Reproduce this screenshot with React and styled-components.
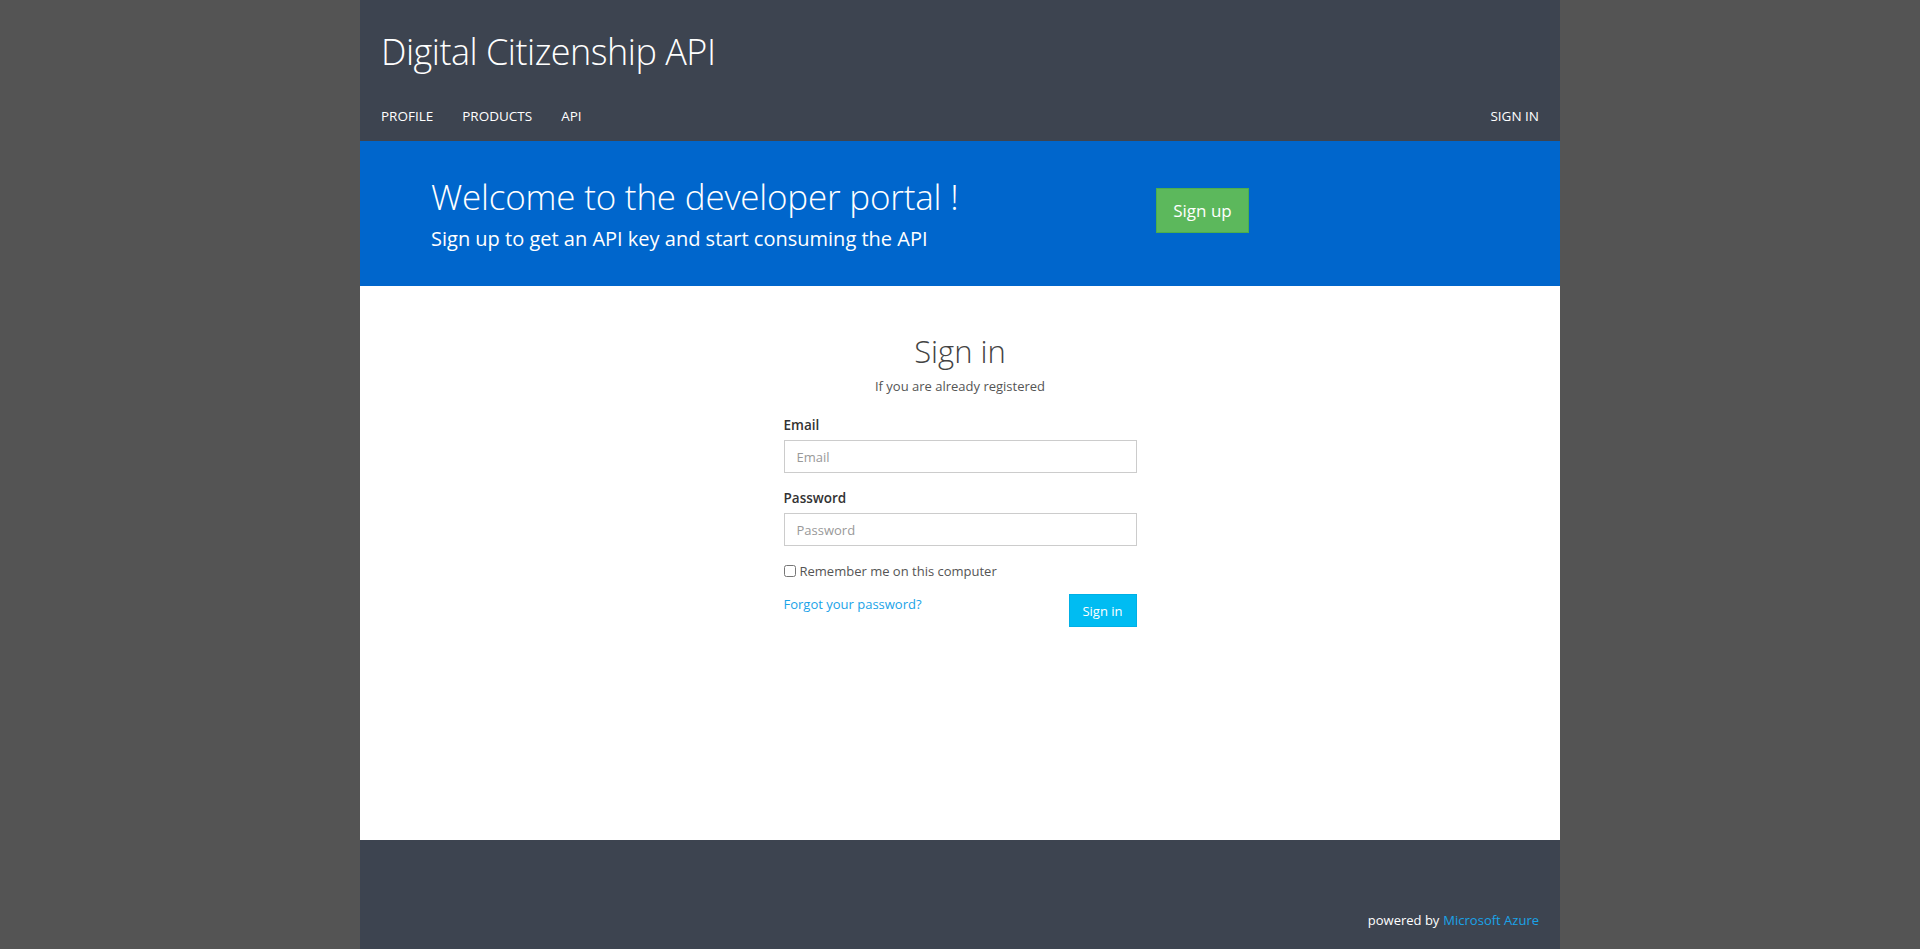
import React from "react";
import styled, { createGlobalStyle } from "styled-components";

const GlobalStyle = createGlobalStyle`
  html, body {
    margin: 0;
    padding: 0;
    background: #545454;
    font-family: "Open Sans", "Noto Sans", sans-serif;
  }
  * { box-sizing: border-box; }
`;

function App() {
  return (
    <>
      <GlobalStyle />
      <StPage>
        <StHeader>
          <StBrand>Digital Citizenship API</StBrand>
          <StNav>
            <StNavGroup>
              <StNavLink>PROFILE</StNavLink>
              <StNavLink>PRODUCTS</StNavLink>
              <StNavLink>API</StNavLink>
            </StNavGroup>
            <StNavLink>SIGN IN</StNavLink>
          </StNav>
        </StHeader>

        <StBanner>
          <div>
            <StWelcome>Welcome to the developer portal !</StWelcome>
            <StLead>Sign up to get an API key and start consuming the API</StLead>
          </div>
          <StSignUp>Sign up</StSignUp>
        </StBanner>

        <StMain>
          <StTitle>Sign in</StTitle>
          <StSubTitle>If you are already registered</StSubTitle>
          <StForm>
            <StField>
              <StLabel>Email</StLabel>
              <StInput type="text" placeholder="Email" />
            </StField>
            <StField>
              <StLabel>Password</StLabel>
              <StInput type="password" placeholder="Password" />
            </StField>
            <StCheckRow>
              <StCheck type="checkbox" />
              Remember me on this computer
            </StCheckRow>
            <StActions>
              <StLink>Forgot your password?</StLink>
              <StSignIn>Sign in</StSignIn>
            </StActions>
          </StForm>
        </StMain>

        <StFooter>
          powered by <StAzure>Microsoft Azure</StAzure>
        </StFooter>
      </StPage>
    </>
  );
}

export default App;

const StPage = styled.div`
  width: 1200px;
  min-height: 949px;
  margin: 0 auto;
  display: flex;
  flex-direction: column;
  background: #fff;
`;

const StHeader = styled.header`
  height: 141px;
  background: #3d4450;
  padding: 0 21px 0 21px;
  display: flex;
  flex-direction: column;
  justify-content: space-between;
  color: #fff;
`;

const StBrand = styled.h1`
  margin: 30px 0 0;
  font-size: 36px;
  font-weight: 300;
  line-height: 1.2;
  letter-spacing: -0.5px;
`;

const StNav = styled.nav`
  display: flex;
  justify-content: space-between;
  align-items: center;
  height: 46px;
  padding-bottom: 5px;
`;

const StNavGroup = styled.div`
  display: flex;
  gap: 29px;
`;

const StNavLink = styled.a`
  font-size: 13.5px;
  color: #fff;
  cursor: pointer;
`;

const StBanner = styled.section`
  height: 145px;
  background: #0066cc;
  padding: 35px 0 0 71px;
  display: grid;
  grid-template-columns: 725px auto;
  align-items: start;
  color: #fff;
`;

const StWelcome = styled.h2`
  margin: 0;
  font-size: 35px;
  font-weight: 300;
  line-height: 1.2;
  letter-spacing: -0.2px;
`;

const StLead = styled.p`
  margin: 8px 0 0;
  font-size: 20px;
  line-height: 1.3;
`;

const StSignUp = styled.button`
  margin-top: 12px;
  width: 93px;
  height: 45px;
  background: #5cb85c;
  border: 1px solid #4cae4c;
  color: #fff;
  font-family: inherit;
  font-size: 17px;
  cursor: pointer;
  justify-self: start;
`;

const StMain = styled.main`
  flex: 1;
  display: flex;
  flex-direction: column;
  align-items: center;
  padding-top: 47px;
`;

const StTitle = styled.h2`
  margin: 0;
  font-size: 31px;
  font-weight: 300;
  line-height: 1.2;
  color: #444;
`;

const StSubTitle = styled.p`
  margin: 7px 0 0;
  font-size: 13px;
  color: #555;
`;

const StForm = styled.form`
  width: 353px;
  margin-top: 21px;
  display: flex;
  flex-direction: column;
`;

const StField = styled.div`
  display: flex;
  flex-direction: column;
  margin-bottom: 16px;
`;

const StLabel = styled.label`
  font-size: 13.5px;
  font-weight: 600;
  color: #333;
  margin-bottom: 6px;
`;

const StInput = styled.input`
  height: 33px;
  border: 1px solid #ccc;
  padding: 0 12px;
  font-family: inherit;
  font-size: 13px;
  color: #555;
  outline: none;
  &::placeholder { color: #999; }
`;

const StCheckRow = styled.label`
  display: flex;
  align-items: center;
  gap: 4px;
  font-size: 13px;
  color: #555;
`;

const StCheck = styled.input`
  margin: 0;
  width: 12px;
  height: 12px;
`;

const StActions = styled.div`
  display: flex;
  justify-content: space-between;
  align-items: flex-start;
  margin-top: 14px;
`;

const StLink = styled.a`
  font-size: 13px;
  color: #1aa3e8;
  margin-top: 1px;
  cursor: pointer;
`;

const StSignIn = styled.button`
  width: 68px;
  height: 33px;
  background: #00bcf2;
  border: 1px solid #00b0e6;
  color: #fff;
  font-family: inherit;
  font-size: 13px;
  cursor: pointer;
`;

const StFooter = styled.footer`
  height: 109px;
  background: #3d4450;
  padding: 0 21px 20px;
  display: flex;
  justify-content: flex-end;
  align-items: flex-end;
  gap: 4px;
  font-size: 13px;
  color: #fff;
`;

const StAzure = styled.a`
  color: #1aa3e8;
`;
